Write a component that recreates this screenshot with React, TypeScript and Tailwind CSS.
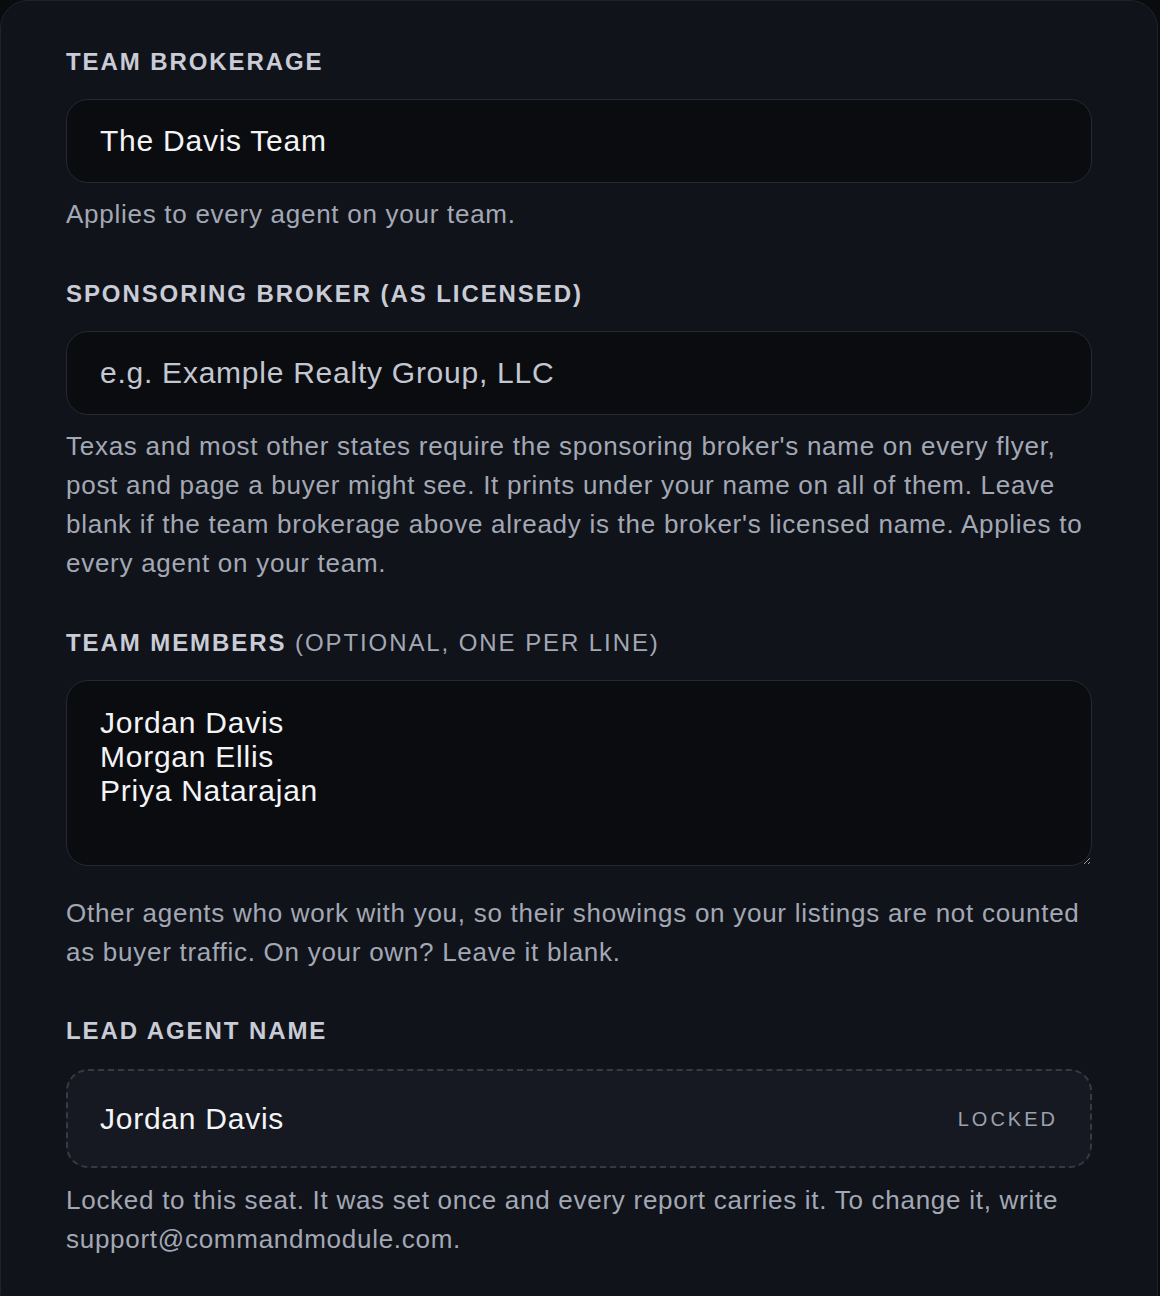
import React from "react";

const labelCls =
  "block text-[24px] leading-[32px] font-bold uppercase tracking-[0.08em] text-[#c9ccd6]";
const helpCls = "text-[26px] leading-[39px] text-[#a3a8b5] tracking-[0.028em]";
const fieldCls =
  "block w-full rounded-[22px] border border-[#252932] bg-[#0b0c10] px-[33px] text-[30px] text-[#f3f4f6] tracking-[0.025em] outline-none placeholder:text-[#c3c7d1]";

export default function App() {
  return (
    <div
      className="min-h-[1296px] bg-[#0a0b0e]"
      style={{ fontFamily: '"Liberation Sans", Arial, sans-serif' }}
    >
      <div className="w-[1158px] min-h-[1320px] rounded-[28px] border border-[#20232b] bg-[#11131a] px-[65px] pt-[45px]">
        {/* team brokerage */}
        <label className={labelCls}>Team Brokerage</label>
        <input
          className={`${fieldCls} mt-[21px] h-[84px]`}
          defaultValue="The Davis Team"
        />
        <p className={`${helpCls} mt-[12px]`}>Applies to every agent on your team.</p>

        {/* sponsoring broker */}
        <label className={`${labelCls} mt-[44px]`}>Sponsoring Broker (as licensed)</label>
        <input
          className={`${fieldCls} mt-[21px] h-[84px]`}
          placeholder="e.g. Example Realty Group, LLC"
        />
        <p className={`${helpCls} mt-[12px]`}>
          Texas and most other states require the sponsoring broker's name on every flyer,
          post and page a buyer might see. It prints under your name on all of them. Leave
          blank if the team brokerage above already is the broker's licensed name. Applies to
          every agent on your team.
        </p>

        {/* team members */}
        <label className={`${labelCls} mt-[44px]`}>
          Team Members{" "}
          <span className="font-normal text-[#a3a8b5]">(optional, one per line)</span>
        </label>
        <textarea
          className={`${fieldCls} mt-[21px] h-[186px] pt-[25px] pb-[24px] leading-[34px]`}
          defaultValue={"Jordan Davis\nMorgan Ellis\nPriya Natarajan"}
        />
        <p className={`${helpCls} mt-[28px]`}>
          Other agents who work with you, so their showings on your listings are not counted
          as buyer traffic. On your own? Leave it blank.
        </p>

        {/* lead agent */}
        <label className={`${labelCls} mt-[43px]`}>Lead Agent Name</label>
        <div className="mt-[22px] flex h-[99px] items-center justify-between rounded-[22px] border-2 border-dashed border-[#353a45] bg-[#161922] pl-[32px] pr-[32px]">
          <span className="text-[30px] text-[#f3f4f6] tracking-[0.025em]">Jordan Davis</span>
          <span className="text-[20px] uppercase tracking-[0.15em] text-[#9ca1ad]">Locked</span>
        </div>
        <p className={`${helpCls} mt-[13px]`}>
          Locked to this seat. It was set once and every report carries it. To change it, write
          support@commandmodule.com.
        </p>
      </div>
    </div>
  );
}
